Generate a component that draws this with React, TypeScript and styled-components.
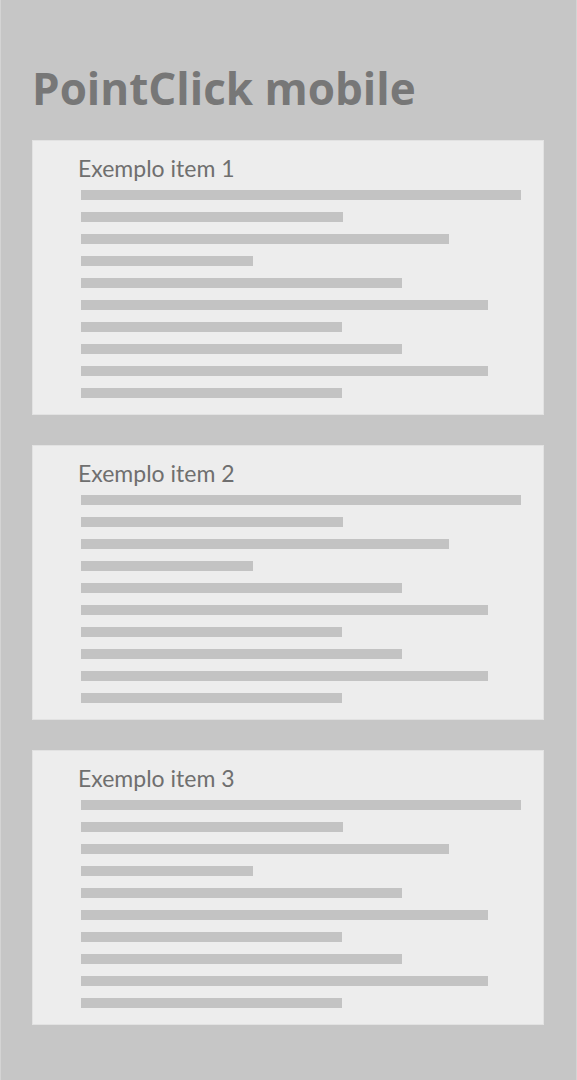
import styled, { createGlobalStyle } from 'styled-components';

const GlobalStyle = createGlobalStyle`
  html, body {
    margin: 0;
    padding: 0;
    background-color: #c6c6c6;
  }

  body {
    font-family: Lato, 'Noto Sans', sans-serif;
  }
`;

const items = ['Exemplo item 1', 'Exemplo item 2', 'Exemplo item 3'];
const barWidths = [440, 262, 368, 172, 321, 407, 261, 321, 407, 261];

export default function App() {
  return (
    <>
      <GlobalStyle />
      <Page>
        <Title>PointClick mobile</Title>
        <CardList>
          {items.map((item) => (
            <Card key={item}>
              <CardTitle>{item}</CardTitle>
              <Lines>
                {barWidths.map((w, i) => (
                  <Line key={i} $width={w} />
                ))}
              </Lines>
            </Card>
          ))}
        </CardList>
      </Page>
    </>
  );
}

const Page = styled.div`
  box-sizing: border-box;
  width: 577px;
  height: 1080px;
  padding: 58px 32px 0 32px;
  border-left: 1px solid #d4d4d4;
  border-right: 1px solid #d4d4d4;
  background-color: #c6c6c6;
`;

const Title = styled.h1`
  margin: 0 0 0 -1px;
  color: #777777;
  font-family: 'Open Sans', Lato, sans-serif;
  font-size: 44px;
  font-weight: 700;
  letter-spacing: 0;
  line-height: 60px;
`;

const CardList = styled.div`
  display: flex;
  flex-direction: column;
  gap: 30px;
  margin-top: 22px;
  margin-left: -1px;
`;

const Card = styled.div`
  box-sizing: border-box;
  width: 512px;
  height: 275px;
  padding: 12px 22px 0 46px;
  background-color: #ededed;
  border: 1px solid #e2e2e2;
`;

const CardTitle = styled.div`
  margin-left: -1px;
  color: #6f6f6f;
  font-family: Lato, 'Noto Sans', sans-serif;
  font-size: 23px;
  font-weight: 400;
  line-height: 30px;
`;

const Lines = styled.div`
  display: flex;
  flex-direction: column;
  gap: 12px;
  margin-top: 7px;
  padding-left: 2px;
`;

const Line = styled.div<{ $width: number }>`
  width: ${({ $width }) => $width}px;
  height: 10px;
  background-color: #c3c3c3;
`;
